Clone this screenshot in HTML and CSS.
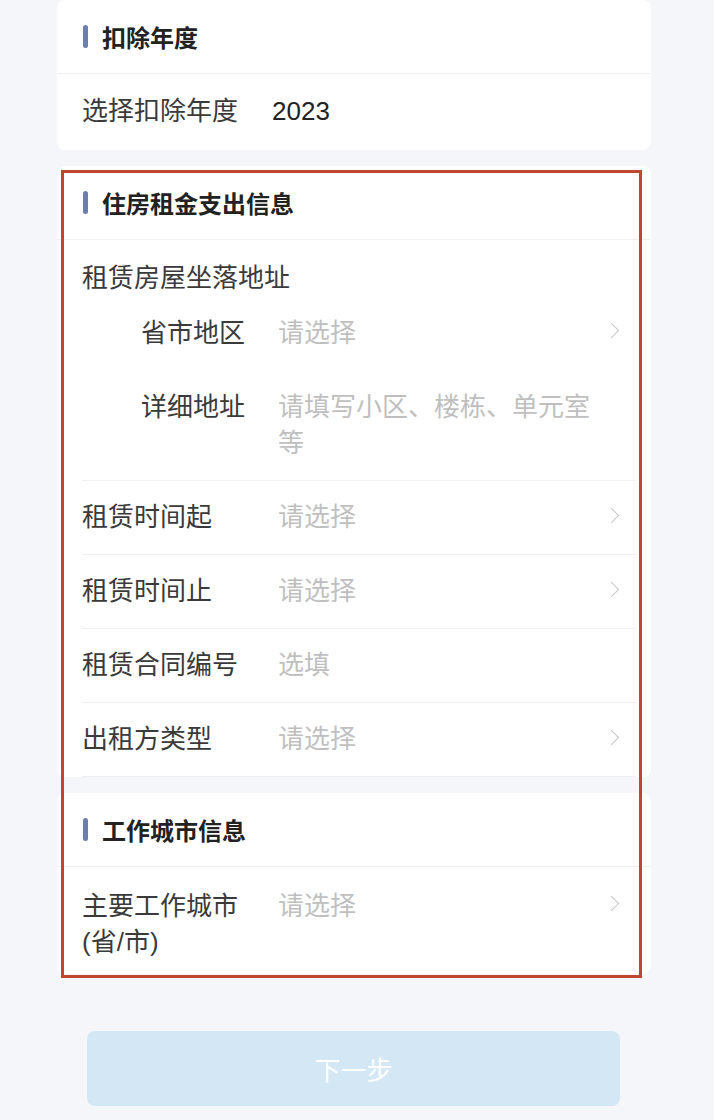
FILE: index.html
```html
<!DOCTYPE html>
<html lang="zh-CN">
<head>
    <meta charset="UTF-8">
    <meta name="viewport" content="width=device-width, initial-scale=1.0">
    <title>住房租金</title>
    <link rel="stylesheet" href="styles.css">
</head>
<body>
    <div class="page">
        <div class="card">
            <div class="card-head"><span class="bar"></span>扣除年度</div>
            <div class="year-row">
                <span class="year-label">选择扣除年度</span>
                <span class="year-value">2023</span>
            </div>
        </div>

        <div class="marked">
            <div class="card">
                <div class="card-head"><span class="bar"></span>住房租金支出信息</div>

                <div class="group">
                    <div class="group-title">租赁房屋坐落地址</div>
                    <div class="row sub">
                        <span class="label">省市地区</span>
                        <span class="value placeholder">请选择</span>
                        <span class="arrow"></span>
                    </div>
                    <div class="row sub">
                        <span class="label">详细地址</span>
                        <span class="value placeholder">请填写小区、楼栋、单元室等</span>
                    </div>
                </div>

                <div class="row line">
                    <span class="label">租赁时间起</span>
                    <span class="value placeholder">请选择</span>
                    <span class="arrow"></span>
                </div>
                <div class="row line">
                    <span class="label">租赁时间止</span>
                    <span class="value placeholder">请选择</span>
                    <span class="arrow"></span>
                </div>
                <div class="row line">
                    <span class="label">租赁合同编号</span>
                    <span class="value placeholder">选填</span>
                </div>
                <div class="row line">
                    <span class="label">出租方类型</span>
                    <span class="value placeholder">请选择</span>
                    <span class="arrow"></span>
                </div>
            </div>

            <div class="card">
                <div class="card-head"><span class="bar"></span>工作城市信息</div>
                <div class="row last">
                    <span class="label">主要工作城市(省/市)</span>
                    <span class="value placeholder">请选择</span>
                    <span class="arrow"></span>
                </div>
            </div>
        </div>

        <button class="next">下一步</button>
    </div>
</body>
</html>
```

FILE: styles.css
```css
* {
    box-sizing: border-box;
}

body {
    margin: 0;
    background: #f4f6f9;
    font-family: "Liberation Sans", "Noto Sans CJK SC", sans-serif;
    color: #333;
}

.page {
    width: 594px;
    margin-left: 57px;
}

.card {
    background: #fff;
    border-radius: 8px;
    margin-bottom: 16px;
}

.card-head {
    height: 74px;
    display: flex;
    align-items: center;
    padding-left: 26px;
    border-bottom: 1px solid #eef0f2;
    font-size: 24px;
    font-weight: bold;
    color: #222;
}

.bar {
    width: 5px;
    height: 23px;
    border-radius: 3px;
    background: #6b7fae;
    margin-right: 14px;
}

.year-row {
    display: flex;
    padding: 20px 25px 21px;
    font-size: 26px;
    line-height: 35px;
}

.year-label {
    color: #3a3a3a;
    margin-right: 34px;
}

.year-value {
    color: #222;
}

.marked {
    position: relative;
}

/* red annotation box drawn over the two cards */
.marked::after {
    content: "";
    position: absolute;
    left: 4px;
    right: 9px;
    top: 4px;
    bottom: -4px;
    border: 3px solid #c2462f;
    pointer-events: none;
}

.group {
    margin: 0 15px 0 25px;
    padding: 21px 0 0;
    border-bottom: 1px solid #eef0f2;
}

.group-title {
    font-size: 26px;
    line-height: 35px;
    color: #3a3a3a;
}

.row {
    display: flex;
    align-items: flex-start;
    padding: 19px 12px 19px 0;
    font-size: 26px;
    line-height: 35px;
}

.row.sub {
    line-height: 36px;
}

.row.line {
    margin: 0 15px 0 25px;
    border-bottom: 1px solid #eef0f2;
}

.row.last {
    margin: 0 15px 0 25px;
    padding: 21px 12px 14px 0;
    line-height: 36px;
}

.label {
    width: 196px;
    flex-shrink: 0;
    color: #3a3a3a;
}

.row.last .label {
    padding-right: 20px;
}

.row.sub .label {
    width: 137px;
    margin-left: 59px;
}

.value {
    flex: 1;
    padding-right: 10px;
}

.placeholder {
    color: #bfbfbf;
}

.arrow {
    width: 10px;
    height: 35px;
    margin-right: 5px;
    position: relative;
}

.arrow::before {
    content: "";
    position: absolute;
    left: -3px;
    top: 10px;
    width: 10px;
    height: 10px;
    border-top: 1.5px solid #c6c6c6;
    border-right: 1.5px solid #c6c6c6;
    transform: rotate(45deg);
}

.next {
    display: block;
    width: 533px;
    height: 75px;
    margin: 57px 0 0 30px;
    border: none;
    border-radius: 8px;
    background: #d4e7f4;
    color: #fff;
    font-family: "Liberation Sans", "Noto Sans CJK SC", sans-serif;
    font-size: 26px;
}
```
